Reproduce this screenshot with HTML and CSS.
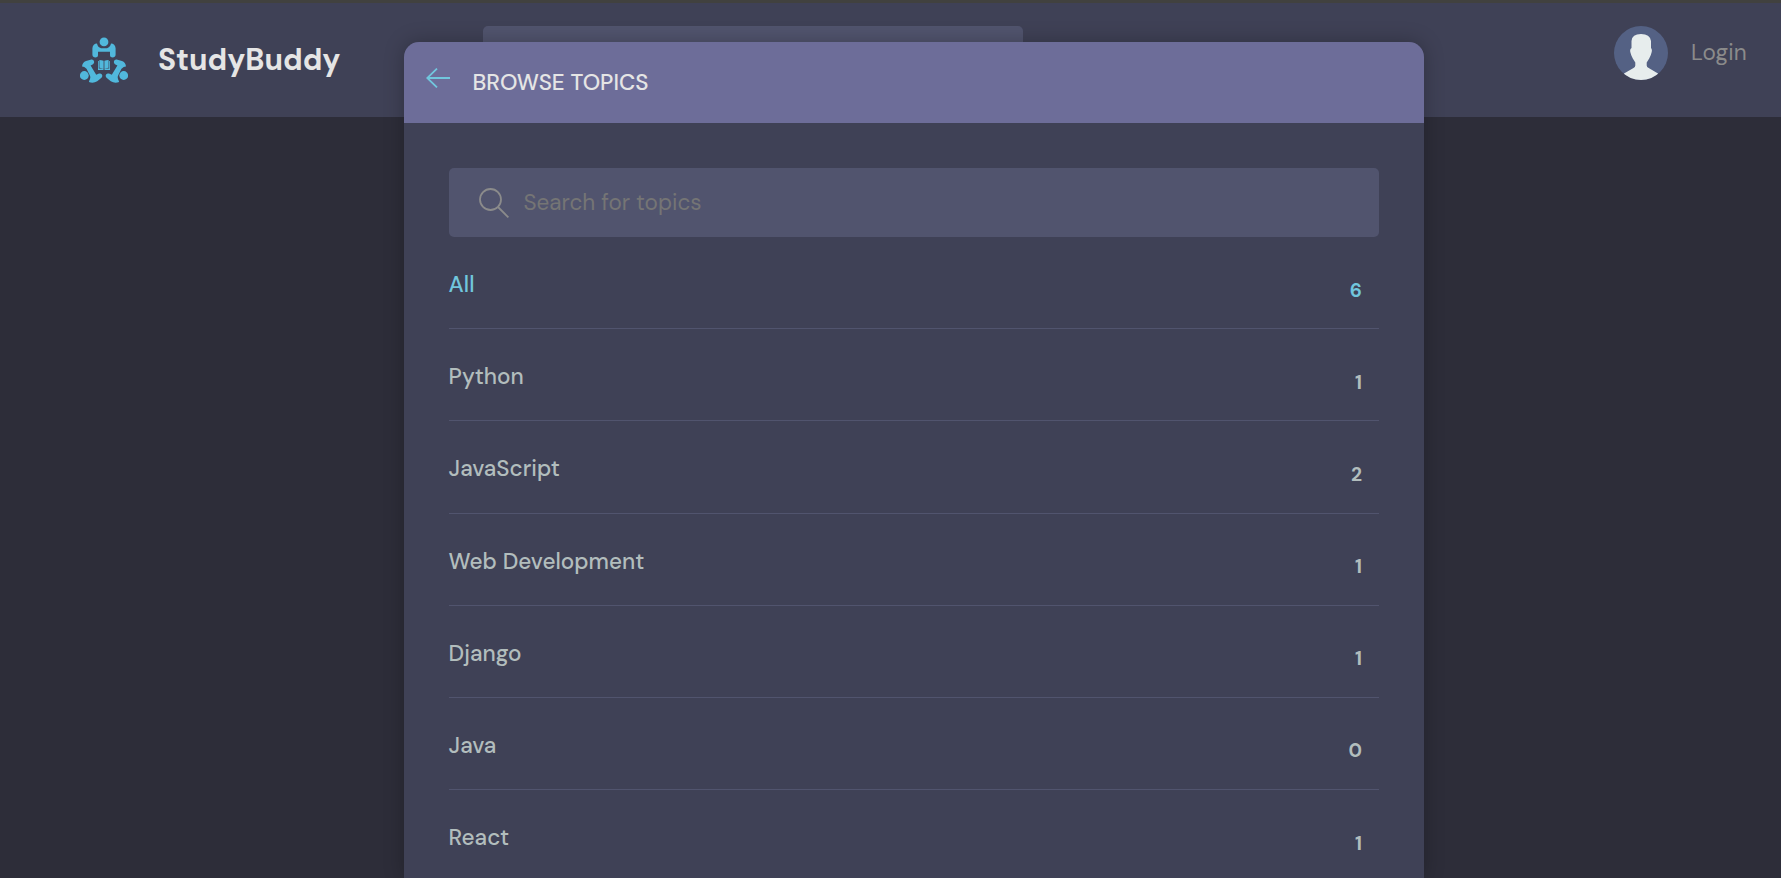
FILE: index.html
```html
<!DOCTYPE html>
<html lang="en">
<head>
<meta charset="utf-8">
<title>StudyBuddy</title>
<link rel="stylesheet" href="styles.css">
</head>
<body>
<header class="header">
  <a class="brand">
    <svg class="brand-logo" viewBox="0 0 48 46" fill="#51b8dc">
      <circle cx="24" cy="4.900" r="4.400"/>
      <path d="M12.400 11.300C12.600 8.300 14.500 6.600 17 6.600q.8 4 4 4.600h6Q30.200 10.500 31 6.600c2.500 0 4.400 1.700 4.600 4.700v6.500c0 3.500-5.600 3.500-5.600.5V14.800H18v3.500c0 3-5.600 3-5.600-.5z"/>
      <circle cx="4.300" cy="38.500" r="4.400"/>
      <path d="M2 29.500Q2.500 25.300 6 24.100L10.600 22.700c3.500-.8 4.800 3 2 4.700l-2 1.200 5.600 9.200 2.800-1.200c3-1 4.500 2.300 2.200 4.300l-4 3.300q-3.800 2.500-8.300.8c.4-2 2.200-3.800 1-6.500L6.500 31.800Q4 29.300 2 29.500z"/>
      <circle cx="43.700" cy="38.500" r="4.400"/>
      <path d="M46 29.500Q45.500 25.300 42 24.100L37.400 22.700c-3.500-.8-4.800 3-2 4.700l2 1.200-5.600 9.200-2.800-1.200c-3-1-4.500 2.300-2.200 4.300l4 3.300q3.800 2.500 8.300.8c-.4-2-2.200-3.800-1-6.500l3.400-6.700Q44 29.300 46 29.500z"/>
      <path d="M18 24h.8v7.600h4.700V33H18zM30 24h-.8v7.600h-4.700V33H30zM19.400 23q2 .2 4.200.8v7.600l-4.200-.6zM28.600 23q-2 .2-4.200.8v7.600l4.200-.6z"/>
    </svg>
    <span class="brand-name">StudyBuddy</span>
  </a>
  <div class="header-search"></div>
  <a class="login">
    <svg class="avatar" viewBox="0 0 54 54">
      <defs><clipPath id="round"><circle cx="27" cy="27" r="27"/></clipPath></defs>
      <g clip-path="url(#round)">
        <path fill="#546184" d="M0 0h54v54H0z"/>
        <path fill="#e7eded" d="M17.500 22V15Q18 8 27 8t10 7v7q1.300 1 .7 4-.7 3.500-2.500 6.500L32.700 36.500v3q0 1.500 2 2.500L44 47.500v7H10v-7l9.500-5.500q1.800-1 1.800-2.500v-3L18.800 32.500q-1.800-3-2.500-6.500-.6-3 1.200-4z"/>
      </g>
    </svg>
    <span class="login-text">Login</span>
  </a>
</header>

<main class="modal">
  <div class="modal-head">
    <svg class="back" viewBox="0 0 24 20" fill="none" stroke="#71c6dd" stroke-width="1.800"><path d="M11 .6 1.200 10l9.800 9.400M1.200 10H24"/></svg>
    <h2 class="modal-title">Browse Topics</h2>
  </div>
  <div class="modal-body">
    <label class="search">
      <svg class="search-icon" viewBox="0 0 30 30" fill="none" stroke="#8b8b8b" stroke-width="1.800"><circle cx="11.500" cy="11.500" r="10.500"/><path d="m19 19 10.400 10.400"/></svg>
      <span class="placeholder">Search for topics</span>
    </label>
    <ul class="topics">
      <li class="topic active"><span class="name">All</span><span class="count">6</span></li>
      <li class="topic"><span class="name">Python</span><span class="count">1</span></li>
      <li class="topic"><span class="name">JavaScript</span><span class="count">2</span></li>
      <li class="topic"><span class="name">Web Development</span><span class="count">1</span></li>
      <li class="topic"><span class="name">Django</span><span class="count">1</span></li>
      <li class="topic"><span class="name">Java</span><span class="count">0</span></li>
      <li class="topic"><span class="name">React</span><span class="count">1</span></li>
    </ul>
  </div>
</main>
</body>
</html>
```
FILE: styles.css
```css
* { box-sizing: border-box; }
html, body { height: 100%; }
body {
  margin: 0;
  overflow: hidden;
  position: relative;
  background: #2d2d39;
  color: #b2bdbd;
  font-family: "DM Sans", Inter, sans-serif;
  font-size: 22.500px;
  line-height: 28px;
}
.header {
  display: flex;
  align-items: flex-start;
  height: 117px;
  padding: 23px 34px 0 80px;
  background: #3f4156;
  border-top: 3px solid #41413f;
}
.brand { display: flex; width: 403px; padding-top: 11px; }
.brand-logo { width: 48px; height: 46px; }
.brand-name {
  margin-left: 30px;
  padding-top: 3px;
  font-size: 30px;
  line-height: 40px;
  font-weight: 700;
  color: #e5e5e5;
}
.header-search { width: 540px; height: 69px; border-radius: 5px; background: #51546e; }
.login { display: flex; margin-left: auto; color: #8b8b8b; }
.avatar { width: 54px; height: 54px; }
.login-text { width: 56px; margin-left: 23px; padding-top: 13px; letter-spacing: .15px; white-space: nowrap; }

.modal {
  position: absolute;
  top: 42px;
  bottom: 0;
  left: 404px;
  width: 1020px;
  overflow: hidden;
  border-radius: 15px 15px 0 0;
  background: #3f4156;
  box-shadow: 0 0 20px rgba(0, 0, 0, .25);
}
.modal-head { display: flex; height: 81px; padding: 26px 22px; background: #6d6d99; }
.back { width: 24px; height: 20px; }
.modal-title {
  margin: 0 0 0 22.500px;
  padding-top: 1px;
  font-size: 22.500px;
  font-weight: 500;
  text-transform: uppercase;
  color: #e5e5e5;
}
.modal-body { padding: 45px 45px 0; }
.search {
  display: flex;
  align-items: center;
  height: 69px;
  padding-left: 30px;
  border-radius: 5px;
  background: #51546e;
}
.search-icon { width: 30px; height: 30px; }
.placeholder { margin-left: 14.500px; color: #757575; }
.topics { margin: 0; padding: 0; list-style: none; }
.topic {
  display: flex;
  justify-content: space-between;
  height: 92.200px;
  padding: 34px 17px 0 0;
  border-bottom: 1px solid #51546e;
}
.topic:last-child { height: 80px; border-bottom: 0; }
.name { margin-left: -.4px; font-weight: 500; }
.count { padding-top: 5.500px; font-size: 19.200px; font-weight: 700; }
.active { color: #71c6dd; }
```
